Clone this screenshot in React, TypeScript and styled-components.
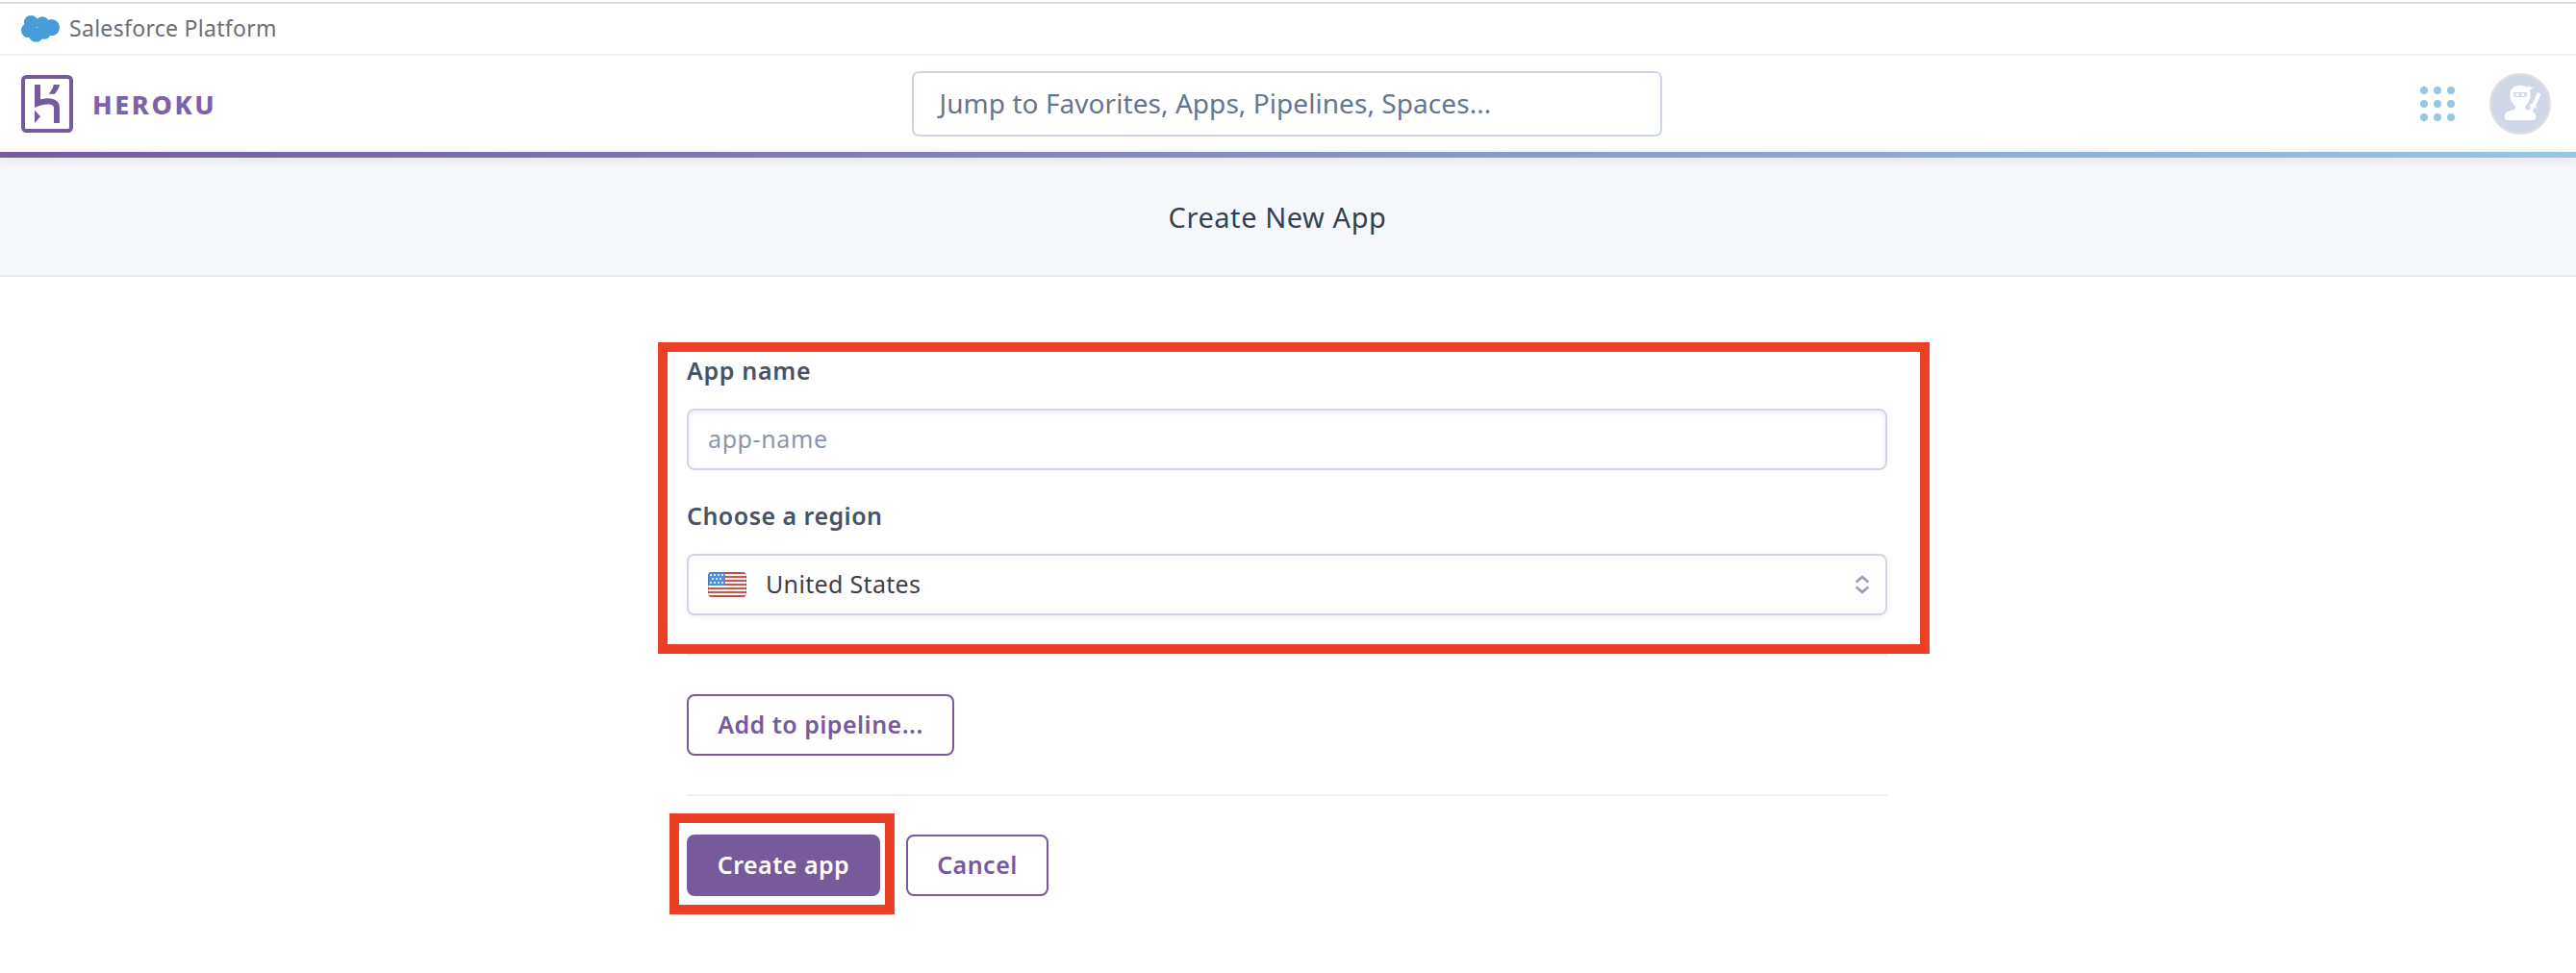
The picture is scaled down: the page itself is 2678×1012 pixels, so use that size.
import React from 'react';
import styled, { createGlobalStyle } from 'styled-components';

const color = {
  purple: '#765a9b',
  wordmark: '#7f61a6',
  red: '#eb4026',
  border: '#cfd7e6',
  rule: '#eeeff5',
};

const GlobalStyle = createGlobalStyle`
  *, *::before, *::after { box-sizing: border-box; }
  html { background: #fff; }
  body {
    margin: 0;
    font-family: 'Noto Sans', 'Open Sans', sans-serif;
    font-size: 25px;
    color: #3f3f44;
  }
`;

const Page = styled.div`
  display: flex;
  flex-direction: column;
  min-height: 1012px;
  padding-top: 2px;
`;

const PlatformBar = styled.div`
  display: flex;
  align-items: center;
  gap: 10px;
  height: 56px;
  padding: 0 22px;
  border-top: 2px solid #dcdcdd;
  border-bottom: 2px solid ${color.rule};
`;

const PlatformName = styled.span`
  padding-bottom: 2px;
  font-size: 23px;
  letter-spacing: 0.3px;
  color: #6d6d6f;
`;

const Header = styled.header`
  display: grid;
  grid-template-columns: 1fr 780px 1fr;
  align-items: center;
  height: 100px;
  padding: 0 26px 0 24px;
`;

const Brand = styled.a`
  display: flex;
  align-items: center;
  gap: 20px;
  margin-left: -2px;
`;

const Wordmark = styled.span`
  padding-top: 1px;
  font-size: 27px;
  font-weight: 800;
  letter-spacing: 2.6px;
  color: ${color.wordmark};
`;

const SearchInput = styled.input`
  width: 780px;
  height: 68px;
  margin: 0;
  padding: 0 20px 2px;
  border: 2px solid ${color.border};
  border-radius: 7px;
  background: #fff;
  font: inherit;
  font-size: 28px;
  letter-spacing: 0.06px;
  text-indent: 6.5px;
  outline: none;

  &::placeholder {
    color: #67758f;
    opacity: 1;
  }
`;

const HeaderActions = styled.div`
  display: flex;
  align-items: center;
  justify-content: flex-end;
  gap: 36px;
`;

const GradientRule = styled.div`
  z-index: 1;
  height: 6px;
  background: linear-gradient(90deg, #765a9b, #97c7e4);
  box-shadow: 0 2px 12px rgba(60, 50, 80, 0.16);
`;

const TitleBar = styled.div`
  display: flex;
  align-items: center;
  justify-content: center;
  height: 124px;
  padding: 1px 22px 0 0;
  border-bottom: 2px solid #e3e8f1;
  background: #f7f8fc;
`;

const Title = styled.h1`
  margin: 0;
  font-size: 29px;
  font-weight: 400;
  letter-spacing: 0.56px;
  color: #363f4e;
`;

const Main = styled.main`
  display: flex;
  justify-content: center;
  padding: 80px 2px 0 0;
`;

const Form = styled.form`
  display: flex;
  flex-direction: column;
  align-items: flex-start;
  width: 1248px;
`;

const Callout = styled.div<{ $inset: string }>`
  position: relative;

  &::after {
    content: '';
    position: absolute;
    inset: ${(p) => p.$inset};
    border: 10px solid ${color.red};
    pointer-events: none;
  }
`;

const Fields = styled(Callout)`
  display: flex;
  flex-direction: column;
  gap: 30px;
  width: 100%;
`;

const Field = styled.div`
  display: flex;
  flex-direction: column;
  gap: 23px;
`;

const Label = styled.label<{ $tracking: number }>`
  height: 34px;
  line-height: 34px;
  font-weight: 600;
  letter-spacing: ${(p) => p.$tracking}px;
  color: #475265;
`;

const TextInput = styled.input`
  height: 64px;
  margin: 0;
  padding: 0 20px 3px;
  border: 2px solid ${color.border};
  border-radius: 8px;
  background: #fff;
  box-shadow: inset 0 2px 6px rgba(207, 215, 230, 0.4);
  font: inherit;
  letter-spacing: 0.6px;
  outline: none;

  &::placeholder {
    color: #8a97ae;
    opacity: 1;
  }
`;

const SelectBox = styled.div`
  display: flex;
  align-items: center;
  height: 64px;
  padding: 0 17px 0 20px;
  border: 2px solid ${color.border};
  border-radius: 8px;
  background: #fff;
  box-shadow: 0 2px 5px rgba(120, 130, 160, 0.12);
`;

const SelectValue = styled.span`
  flex: 1;
  padding: 0 0 3px 20px;
  letter-spacing: 0.33px;
`;

const Divider = styled.hr`
  width: 100%;
  height: 2px;
  margin: 40px 0;
  border: 0;
  background: ${color.rule};
`;

const Actions = styled.div`
  display: flex;
  gap: 27px;
`;

const Button = styled.button<{ $primary?: boolean; $width: number }>`
  width: ${(p) => p.$width}px;
  height: 64px;
  margin: 0;
  padding: 0 0 2px;
  border: 2px solid ${color.purple};
  border-radius: 8px;
  background: ${(p) => (p.$primary ? color.purple : '#fff')};
  color: ${(p) => (p.$primary ? '#fff' : color.purple)};
  font: inherit;
  font-weight: 600;
  letter-spacing: 0.47px;
  white-space: nowrap;
`;

const CloudIcon = () => (
  <svg width="40" height="28" viewBox="0 0 40 28" fill="#479cd8">
    <circle cx="10.3" cy="7.5" r="7.4" />
    <circle cx="22" cy="8" r="6.8" />
    <circle cx="31.4" cy="12.6" r="8.6" />
    <circle cx="7.5" cy="15.6" r="7.5" />
    <circle cx="15.4" cy="20.2" r="7.6" />
    <circle cx="23.6" cy="17.4" r="7.4" />
  </svg>
);

const HerokuIcon = () => (
  <svg width="54" height="60" viewBox="0 0 54 60" fill={color.purple}>
    <rect x="2" y="2" width="50" height="56" rx="3.5" fill="none" stroke={color.purple} strokeWidth="4" />
    <path d="M14 10h6v15.6c2.2-.7 5-1.3 8-1.3 8 0 12 4.300 12 10V50h-6V34.600c0-3-2-4.200-6-4.200-5 0-10.300 1.800-14 3.500z" />
    <path d="M14 36.500l6 6.700-6 6.700z" />
    <path d="M33.800 10H40c-.8 3.700-2.500 6.900-5.200 9.800h-6.300c2.700-2.900 4.500-6.100 5.300-9.800z" />
  </svg>
);

const gridSteps = [4, 18, 32];

const AppGridIcon = () => (
  <svg width="36" height="36" viewBox="0 0 36 36" fill="#98c6e5">
    {gridSteps.map((y) => gridSteps.map((x) => <circle key={`${x}-${y}`} cx={x} cy={y} r="4" />))}
  </svg>
);

const AvatarIcon = () => (
  <svg width="64" height="64" viewBox="0 0 64 64" fill="#fff">
    <circle cx="32" cy="32" r="31" fill="#d0d8e7" stroke="#e0e0e1" strokeWidth="2" />
    <path d="M32 12.700c6.500 0 10.700 3.800 10.700 9.800 0 5.500-3 9.800-5.700 12.300v2.400c3.800 1.500 8 2.600 10 4.300 1.200 1.100 1.300 2.800 1.300 4.800 0 1.700-.9 2.700-2.600 2.700H18.300c-1.700 0-2.600-1-2.600-2.700 0-2 .1-3.700 1.300-4.800 2-1.700 6.200-2.800 10-4.300v-2.400c-2.700-2.500-5.700-6.800-5.700-12.300 0-6 4.200-9.800 10.700-9.800z" />
    <path d="M38.500 15.500l3.600-3 .3 2.500 3.800-.6-4.800 4.100z" />
    <path d="M25.300 20h13.600c.4 3-.5 5-3 5h-7.800c-2.300 0-3.200-2-2.800-5z" fill="#d0d8e7" />
    <circle cx="29" cy="22.500" r="1.600" />
    <circle cx="34.800" cy="22.500" r="1.600" />
    <path d="M50.900 22.600L46.600 32.500" stroke="#fff" strokeWidth="4" strokeLinecap="square" />
    <path d="M42.500 33.300l6.300 2.700" stroke="#fff" strokeWidth="1.800" strokeLinecap="round" />
    <path d="M45.100 35.500L42.700 40" stroke="#fff" strokeWidth="3.600" />
  </svg>
);

const starRows = [
  { y: 2, xs: [2, 6, 10, 14] },
  { y: 6, xs: [4, 8, 12] },
  { y: 10, xs: [2, 6, 10, 14] },
];

const FlagIcon = () => (
  <svg width="40" height="26" viewBox="0 0 40 26">
    <clipPath id="flagShape">
      <rect width="40" height="26" rx="4" />
    </clipPath>
    <g clipPath="url(#flagShape)">
      <rect width="40" height="26" fill="#fff" />
      {[0, 4, 8, 12, 16, 20, 24].map((y) => (
        <rect key={y} y={y} width="40" height="2" fill="#d4524a" />
      ))}
      <rect width="18" height="14" fill="#4f8fe0" />
      {starRows.map((row) =>
        row.xs.map((x) => <rect key={`${x}-${row.y}`} x={x} y={row.y} width="2" height="2" fill="#dbe8fa" />),
      )}
      <rect x="0.5" y="0.5" width="39" height="25" rx="3.500" fill="none" stroke="#8a3030" strokeOpacity="0.3" />
    </g>
  </svg>
);

const SelectArrows = () => (
  <svg width="14" height="20" viewBox="0 0 14 20" fill="none" stroke="#96a2b8" strokeWidth="2.800">
    <path d="M.7 7.500L7 2l6.300 5.500" />
    <path d="M.7 12.500L7 18l6.300-5.500" />
  </svg>
);

export default function App() {
  return (
    <Page>
      <GlobalStyle />
      <PlatformBar>
        <CloudIcon />
        <PlatformName>Salesforce Platform</PlatformName>
      </PlatformBar>
      <Header>
        <Brand>
          <HerokuIcon />
          <Wordmark>HEROKU</Wordmark>
        </Brand>
        <SearchInput placeholder="Jump to Favorites, Apps, Pipelines, Spaces..." />
        <HeaderActions>
          <AppGridIcon />
          <AvatarIcon />
        </HeaderActions>
      </Header>
      <GradientRule />
      <TitleBar>
        <Title>Create New App</Title>
      </TitleBar>
      <Main>
        <Form>
          <Fields $inset="-12px -44px -40px -30px">
            <Field>
              <Label htmlFor="app-name" $tracking={0.68}>App name</Label>
              <TextInput id="app-name" placeholder="app-name" />
            </Field>
            <Field>
              <Label $tracking={0.47}>Choose a region</Label>
              <SelectBox>
                <FlagIcon />
                <SelectValue>United States</SelectValue>
                <SelectArrows />
              </SelectBox>
            </Field>
          </Fields>
          <Divider />
          <Button type="button" $width={278}>Add to pipeline...</Button>
          <Divider />
          <Actions>
            <Callout $inset="-22px -15px -19px -18px">
              <Button type="button" $width={201} $primary>Create app</Button>
            </Callout>
            <Button type="button" $width={148}>Cancel</Button>
          </Actions>
        </Form>
      </Main>
    </Page>
  );
}
